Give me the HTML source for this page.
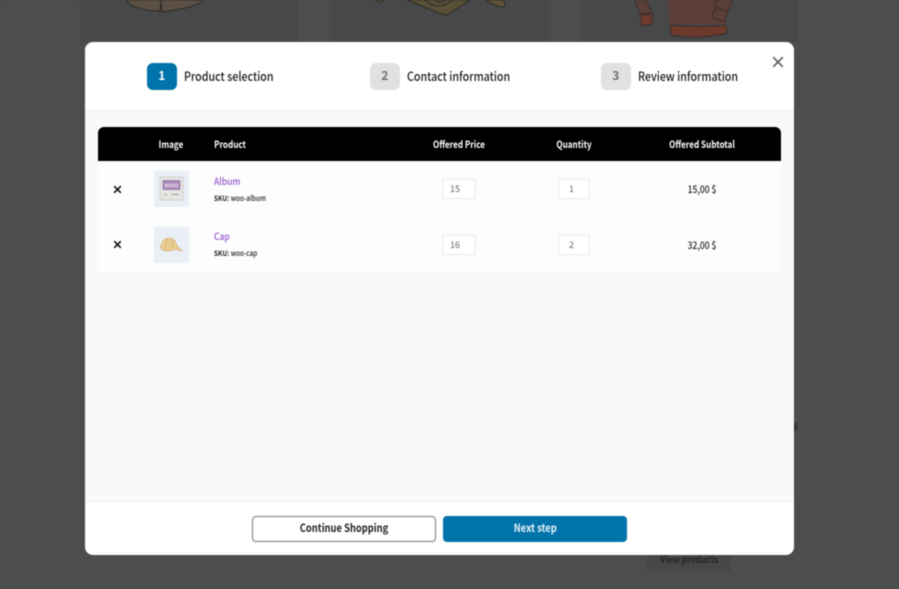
<!DOCTYPE html>
<html><head><meta charset="utf-8">
<style>
*{box-sizing:border-box;margin:0;padding:0}
html,body{width:899px;height:589px;overflow:hidden;background:#4d4d4d}
body{position:relative;font-family:"Noto Sans CJK JP","Liberation Sans",sans-serif;color:#111}
#w{position:absolute;left:0;top:0;width:899px;height:589px;background:#4d4d4d;filter:blur(.4px)}
.a{position:absolute}
.card{position:absolute;top:0;height:42px;width:218px;background:#47484a}
#modal{position:absolute;left:85px;top:42px;width:709px;height:513px;background:#fff;border-radius:8px;overflow:hidden}
.badge{position:absolute;top:63px;width:30.5px;height:27px;border-radius:6px;background:#e1e1e1;color:#6f6f6f;font-size:12px;font-weight:700;text-align:center;line-height:26px}
.step{position:absolute;top:68px;font-size:12.5px;font-weight:500;line-height:15px;color:#1c1c1c;white-space:nowrap;transform:scaleX(.855);transform-origin:left}
.th{position:absolute;top:138px;font-size:10px;font-weight:700;line-height:12px;color:#fff;white-space:nowrap;transform:translateX(-50%) scaleX(.81)}
.inp{position:absolute;height:20px;background:#fff;border:1px solid #ebebeb;font-size:9px;line-height:18px;color:#666;padding-left:7px}
.thumb{position:absolute;left:154px;width:35px;height:35.5px;background:#e9eff4;border-radius:2px}
.link{position:absolute;left:214px;font-size:10px;font-weight:500;line-height:12px;color:#9158c8;transform:scaleX(.85);transform-origin:left}
.sku{position:absolute;left:214px;font-size:7.5px;font-weight:500;line-height:10px;color:#222;white-space:nowrap;transform:scaleX(.86);transform-origin:left}
.price{position:absolute;font-size:10px;font-weight:500;line-height:12px;color:#222;white-space:nowrap;transform:translateX(-50%) scaleX(.85);left:702px}
.btx{display:inline-block;transform:scaleX(.85)}
</style></head>
<body>
<div id="w">
<div class="card" style="left:80px"></div>
<div class="card" style="left:331px"></div>
<div class="card" style="left:580px"></div>

<svg class="a" style="left:0;top:0" width="899" height="42" viewBox="0 0 899 42">
  <path d="M126 0C131 7 142 11 160 11L161 1V0Z" fill="#5c5045" stroke="#2c2a26"/>
  <path d="M161 0L162 12L175 10C189 8 198 5 204 0Z" fill="#5c5045" stroke="#2c2a26"/>
  <path d="M375 0L379 3L384 0Z" fill="#5e5238" stroke="#2c2a26"/>
  <path d="M407 0L441 14L447 15L470 0Z" fill="#5a5037" stroke="#2c2a26"/>
  <path d="M425 0C430 6 444 9 452 0M435 0C438 3 443 3 446 0" fill="none" stroke="#2c2a26"/>
  <path d="M486 0C490 3 498 7 503 7C506 6 505 2 503 0Z" fill="#5e5238" stroke="#2c2a26"/>
  <path d="M635 0L640 14L652 13L647 0Z" fill="#5c3e39" stroke="#2e2826" stroke-width=".7"/>
  <path d="M640 15L642 26L652 24L653 14Z" fill="#6e3a2e" stroke="#2e2826" stroke-width=".7"/>
  <path d="M667 0L670 24H727L715 0Z" fill="#5c3e39"/>
  <path d="M715 0L716 7L728 12L733 0Z" fill="#5c3e39" stroke="#2e2826" stroke-width=".7"/>
  <path d="M716 7L712 17L724 22L728 12Z" fill="#5c3e39" stroke="#2e2826" stroke-width=".7"/>
  <path d="M670 25C686 27 712 27 726 25L727 33C710 38 686 38 671 35Z" fill="#6e3a2c" stroke="#2e2826" stroke-width=".7"/>
</svg>

<div class="a" style="left:647px;top:548px;width:84px;height:23px;background:#474747"></div>
<div class="a" style="left:660px;top:553px;font-size:10px;font-weight:700;color:#252525;line-height:12px;white-space:nowrap;transform:scaleX(.83);transform-origin:left">View products</div>
<div class="a" style="left:794px;top:423px;width:3px;height:8px;background:#333"></div>

<div id="modal"></div>
<div class="a" style="left:85px;top:110px;width:709px;height:392px;background:#f8f9fb;border-top:1px solid #eeeff1;border-bottom:1px solid #eeeff1"></div>

<div class="badge" style="left:146.5px;background:#0073aa;color:#fff">1</div>
<div class="step" style="left:184px">Product selection</div>
<div class="badge" style="left:369.5px">2</div>
<div class="step" style="left:407px">Contact information</div>
<div class="badge" style="left:600.5px">3</div>
<div class="step" style="left:638px">Review information</div>
<svg class="a" style="left:771px;top:55px" width="14" height="14" viewBox="0 0 14 14"><path d="M2.2 2.2L11.8 11.8M11.8 2.2L2.2 11.8" stroke="#606060" stroke-width="1.7" fill="none"/></svg>

<div class="a" style="left:98px;top:161px;width:683px;height:111px;background:#fdfdfe"></div>
<div class="a" style="left:98px;top:127px;width:683px;height:34px;background:#000;border-radius:6px 6px 0 0"></div>
<div class="th" style="left:171px">Image</div>
<div class="th" style="left:230px">Product</div>
<div class="th" style="left:459px">Offered Price</div>
<div class="th" style="left:574px">Quantity</div>
<div class="th" style="left:702px">Offered Subtotal</div>

<svg class="a" style="left:113px;top:185px" width="9" height="9" viewBox="0 0 9 9"><path d="M1.2 1.2L7.8 7.8M7.8 1.2L1.2 7.8" stroke="#111" stroke-width="1.6"/></svg>
<svg class="a" style="left:113px;top:240px" width="9" height="9" viewBox="0 0 9 9"><path d="M1.2 1.2L7.8 7.8M7.8 1.2L1.2 7.8" stroke="#111" stroke-width="1.6"/></svg>

<div class="thumb" style="top:171px"></div>
<svg class="a" style="left:154px;top:171px" width="35" height="36" viewBox="0 0 35 36">
  <rect x="6" y="6" width="23" height="23" fill="#e6e6e2" stroke="#c9c9c6" stroke-width=".8"/>
  <rect x="8.5" y="9" width="18" height="10" rx="1" fill="#a587b5"/>
  <text x="17.5" y="16.5" font-size="7" font-weight="700" fill="#e6dcec" text-anchor="middle" font-family="Liberation Sans,sans-serif">woo</text>
  <path d="M10 23.5H13M17 23.5H25" stroke="#999" stroke-width="1"/>
</svg>
<div class="thumb" style="top:227px"></div>
<svg class="a" style="left:154px;top:227px" width="35" height="36" viewBox="0 0 35 36">
  <path d="M6.5 20C8 14 11 11 15 11C20 11 22 15 23 19L28 24L21 22C16 25 8 25 6.5 20Z" fill="#e9cd92" stroke="#cfa968" stroke-width=".6"/>
  <path d="M13 11.5L11 23M18 12.5L19 22" stroke="#cfa968" stroke-width=".6" fill="none"/>
</svg>

<div class="link" style="top:174.5px">Album</div>
<div class="sku" style="top:193.5px"><b>SKU:</b> woo-album</div>
<div class="link" style="top:230px">Cap</div>
<div class="sku" style="top:248.5px"><b>SKU:</b> woo-cap</div>

<div class="inp" style="left:442px;top:179px;width:34px">15</div>
<div class="inp" style="left:558px;top:179px;width:32px;padding-left:10px">1</div>
<div class="inp" style="left:442px;top:235px;width:34px">16</div>
<div class="inp" style="left:558px;top:235px;width:32px;padding-left:10px">2</div>
<div class="price" style="top:183px">15,00 $</div>
<div class="price" style="top:238.5px">32,00 $</div>

<div class="a" style="left:251.5px;top:515.5px;width:184px;height:26px;border:1.5px solid #777;border-radius:4px;background:#fff;text-align:center;font-size:11px;font-weight:700;line-height:22px;color:#222"><span class="btx">Continue Shopping</span></div>
<div class="a" style="left:443px;top:515.5px;width:184px;height:26px;border-radius:4px;background:#0073aa;text-align:center;font-size:11px;font-weight:700;line-height:25px;color:#e8f3f8"><span class="btx">Next step</span></div>
</div>
</body></html>
